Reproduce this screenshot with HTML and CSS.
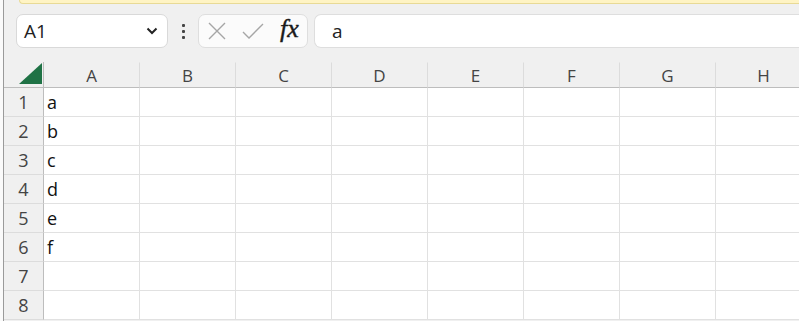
FILE: index.html
```html
<!DOCTYPE html>
<html lang="en">
  <head>
    <meta charset="UTF-8" />
    <title>Sheet</title>
    <link rel="stylesheet" href="styles.css">
  </head>
  <body>
    <div class="window">
      <div class="edge"></div>
      <div class="main">
        <!-- Info bar peeking at the top -->
        <div class="infobar"></div>
        <!-- Name box + formula bar -->
        <div class="formula-row">
          <div class="namebox">
            <span>A1</span>
            <svg class="chevron" width="12" height="8" viewBox="0 0 12 8"><path d="M1.5 1.5 L6 6 L10.5 1.5" fill="none" stroke="#222" stroke-width="2"/></svg>
          </div>
          <div class="kebab"><i></i><i></i><i></i></div>
          <div class="fbuttons">
            <svg width="18" height="18" viewBox="0 0 18 18"><path d="M1 1 L17 17 M17 1 L1 17" stroke="#a6a6a6" stroke-width="1.4" fill="none"/></svg>
            <svg width="22" height="18" viewBox="0 0 22 18"><path d="M1 10 L7 16 L21 2" stroke="#a6a6a6" stroke-width="1.4" fill="none"/></svg>
            <span class="fx">fx</span>
          </div>
          <div class="finput">a</div>
        </div>
        <!-- Grid -->
        <div class="grid">
          <div class="corner">
            <svg width="23" height="21" viewBox="0 0 23 21"><polygon points="23,0 23,21 0,21" fill="#1f7245"/></svg>
          </div>
          <div class="colhead">A</div>
          <div class="colhead">B</div>
          <div class="colhead">C</div>
          <div class="colhead">D</div>
          <div class="colhead">E</div>
          <div class="colhead">F</div>
          <div class="colhead">G</div>
          <div class="colhead">H</div>

          <div class="rowhead">1</div><div class="cell">a</div><div class="cell"></div><div class="cell"></div><div class="cell"></div><div class="cell"></div><div class="cell"></div><div class="cell"></div><div class="cell"></div>
          <div class="rowhead">2</div><div class="cell">b</div><div class="cell"></div><div class="cell"></div><div class="cell"></div><div class="cell"></div><div class="cell"></div><div class="cell"></div><div class="cell"></div>
          <div class="rowhead">3</div><div class="cell">c</div><div class="cell"></div><div class="cell"></div><div class="cell"></div><div class="cell"></div><div class="cell"></div><div class="cell"></div><div class="cell"></div>
          <div class="rowhead">4</div><div class="cell">d</div><div class="cell"></div><div class="cell"></div><div class="cell"></div><div class="cell"></div><div class="cell"></div><div class="cell"></div><div class="cell"></div>
          <div class="rowhead">5</div><div class="cell">e</div><div class="cell"></div><div class="cell"></div><div class="cell"></div><div class="cell"></div><div class="cell"></div><div class="cell"></div><div class="cell"></div>
          <div class="rowhead">6</div><div class="cell">f</div><div class="cell"></div><div class="cell"></div><div class="cell"></div><div class="cell"></div><div class="cell"></div><div class="cell"></div><div class="cell"></div>
          <div class="rowhead">7</div><div class="cell"></div><div class="cell"></div><div class="cell"></div><div class="cell"></div><div class="cell"></div><div class="cell"></div><div class="cell"></div><div class="cell"></div>
          <div class="rowhead">8</div><div class="cell"></div><div class="cell"></div><div class="cell"></div><div class="cell"></div><div class="cell"></div><div class="cell"></div><div class="cell"></div><div class="cell"></div>
        </div>
      </div>
    </div>
  </body>
</html>
```
FILE: styles.css
```css
* {
  box-sizing: border-box;
  margin: 0;
  padding: 0;
}
html,
body {
  height: 100%;
}
body {
  font-family: "Open Sans", "Noto Sans", sans-serif;
  background: #f0f0f0;
  color: #222;
  overflow: hidden;
}
.window {
  display: flex;
  height: 100%;
}
/* Window edge on the left */
.edge {
  width: 4px;
  flex-shrink: 0;
  background: #fafafa;
  border-right: 1px solid #9a9a9a;
}
.main {
  flex: 1;
  min-width: 0;
  display: flex;
  flex-direction: column;
}
/* Yellow info bar */
.infobar {
  height: 4px;
  margin-left: 15px;
  background: #fff4c4;
  border-bottom: 1px solid #e8da96;
  border-left: 1px solid #e8da96;
  border-bottom-left-radius: 6px;
}
/* Formula row */
.formula-row {
  display: flex;
  align-items: center;
  height: 34px;
  margin-top: 10px;
  padding-left: 12px;
}
.namebox {
  width: 152px;
  height: 34px;
  background: #fff;
  border: 1px solid #d9d9d9;
  border-radius: 7px;
  display: flex;
  align-items: center;
  justify-content: space-between;
  padding: 0 9px 0 7px;
  font-size: 19px;
}
.kebab {
  width: 30px;
  display: flex;
  flex-direction: column;
  align-items: center;
  gap: 3px;
}
.kebab i {
  width: 3px;
  height: 3px;
  background: #444;
  border-radius: 1px;
}
.fbuttons {
  width: 110px;
  height: 34px;
  background: #fbfbfb;
  border: 1px solid #dedede;
  border-radius: 7px;
  display: flex;
  align-items: center;
  padding: 0 6px 0 9px;
  gap: 16px;
}
.fx {
  font-family: "Liberation Serif", serif;
  font-style: italic;
  font-size: 26px;
  color: #1a1a1a;
  margin-top: -4px;
  -webkit-text-stroke: 0.4px #1a1a1a;
}
.finput {
  flex: 1;
  height: 34px;
  margin-left: 6px;
  background: #fff;
  border: 1px solid #dedede;
  border-right: none;
  border-radius: 7px 0 0 7px;
  display: flex;
  align-items: center;
  padding-left: 17px;
  font-size: 19px;
}
/* Sheet grid */
.grid {
  margin-top: 14px;
  display: grid;
  grid-template-columns: 40px repeat(8, 96px);
  grid-template-rows: 26px;
  grid-auto-rows: 29px;
  background: #fff;
}
.corner,
.colhead,
.rowhead {
  background: #f0f0f0;
  color: #444;
  display: flex;
  align-items: center;
  justify-content: center;
}
.corner {
  border-right: 1px solid #bdbdbd;
  border-bottom: 1px solid #bdbdbd;
  align-items: flex-end;
  justify-content: flex-end;
  padding: 0 1px 3px 0;
}
.corner svg {
  display: block;
}
.colhead {
  font-size: 17px;
  border-bottom: 1px solid #bdbdbd;
  border-right: 1px solid #dcdcdc;
  border-top: 1px solid transparent;
}
.rowhead {
  font-size: 18px;
  border-right: 1px solid #bdbdbd;
  border-bottom: 1px solid #dcdcdc;
}
.cell {
  font-size: 18px;
  color: #111;
  padding-left: 3px;
  display: flex;
  align-items: center;
  border-right: 1px solid #e1e1e1;
  border-bottom: 1px solid #e1e1e1;
}
```
